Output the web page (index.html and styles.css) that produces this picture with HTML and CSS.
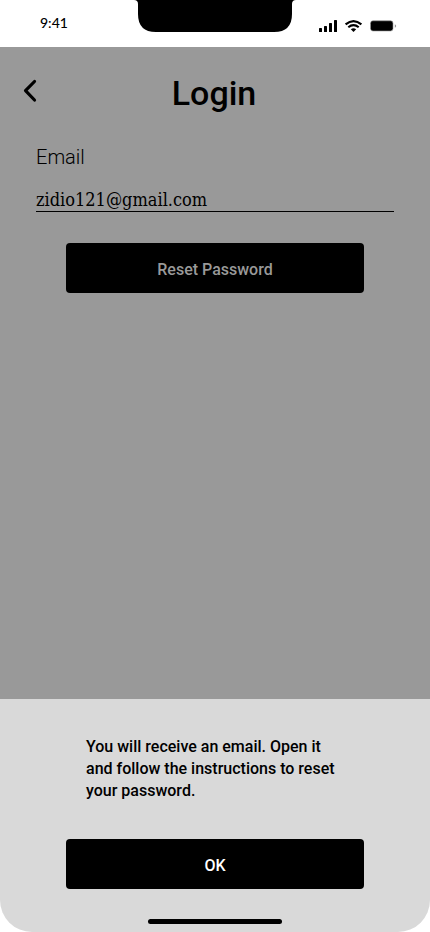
FILE: index.html
```html
<!DOCTYPE html>
<html lang="en">
<head>
<meta charset="utf-8">
<meta name="viewport" content="width=device-width, initial-scale=1">
<title>Login</title>
<link rel="stylesheet" href="styles.css">
</head>
<body>
<div class="screen">
  <header class="status">
    <span class="time">9:41</span>
    <svg class="notch" width="162" height="32" viewBox="0 0 162 32" aria-hidden="true"><path d="M0 0H162Q158 0 158 4V14Q158 32 140 32H22Q4 32 4 14V4Q4 0 0 0Z"/></svg>
    <div class="indicators">
      <svg width="78" height="12" viewBox="0 0 78 12" aria-hidden="true">
        <rect x="0" y="8" width="3" height="4" rx=".6"/>
        <rect x="5" y="6" width="3" height="6" rx=".6"/>
        <rect x="10" y="3" width="3" height="9" rx=".6"/>
        <rect x="15" y="0" width="3" height="12" rx=".6"/>
        <g fill="none" stroke="#000" stroke-width="2.1"><path d="M26.6 4.4Q34.5-2.2 42.4 4.4"/><path d="M29.3 7.3Q34.5 2.9 39.7 7.3"/></g>
        <path d="M31.8 9.3Q34.5 7.2 37.2 9.3L34.5 12Z"/>
        <rect x="51.5" y=".8" width="22.5" height="10.2" rx="2.4"/>
        <rect x="51.5" y=".8" width="22.5" height="10.2" rx="2.4" fill="none" stroke="#999" stroke-width=".6"/>
        <path d="M75.8 4.2Q77.2 4.8 77.2 6T75.8 7.8Z" fill="#999"/>
      </svg>
    </div>
  </header>
  <main class="page">
    <div class="heading">
      <button class="back" type="button" aria-label="Back"><svg width="16" height="24" viewBox="0 0 16 24" aria-hidden="true"><path d="M12.5 2.5L3.5 11.7L12.5 21"/></svg></button>
      <h1>Login</h1>
    </div>
    <form class="form">
      <label for="email">Email</label>
      <input id="email" type="email" value="zidio121@gmail.com">
      <button class="action muted" type="button">Reset Password</button>
    </form>
  </main>
  <section class="sheet" role="dialog" aria-labelledby="message">
    <p id="message">You will receive an email. Open it and follow the instructions to reset your password.</p>
    <button class="action" type="button">OK</button>
    <div class="home"></div>
  </section>
</div>
</body>
</html>
```
FILE: styles.css
```css
* { box-sizing: border-box; }
body { margin: 0; background: #fff; color: #000; font-family: Roboto, "Liberation Sans", sans-serif; }
button { font: inherit; color: inherit; border: 0; cursor: pointer; }
svg { display: block; }
.screen { min-height: 100vh; display: flex; flex-direction: column; background: #fff; }
.status { height: 47px; display: grid; grid-template-columns: 1fr auto 1fr; align-items: start; }
.time { padding: 14px 0 0 40px; font: 500 14px/18px Lato, sans-serif; }
.indicators { display: flex; justify-content: flex-end; padding: 20px 33px 0 0; }
.page { flex: 1; background: #999; padding-top: 24px; }
.heading { display: grid; grid-template-columns: 44px 1fr 46px; align-items: center; height: 40px; }
.heading h1 { margin: 0; padding-top: 4px; text-align: center; font-size: 34px; line-height: 36px; font-weight: 500; }
.back { justify-self: end; width: 22px; height: 24px; padding: 0; background: none; }
.back path { fill: none; stroke: #000; stroke-width: 3.2; stroke-linecap: round; stroke-linejoin: round; }
.form { display: flex; flex-direction: column; padding: 34px 36px 0; }
.form label { font-size: 20px; line-height: 24px; font-weight: 300; }
.form input { width: 100%; height: 43px; padding: 18px 0 0; border: 0; border-bottom: 1px solid #000; border-radius: 0; background: none; outline: 0; color: #000; font: 18px/24px "DejaVu Serif Condensed", "DejaVu Serif", serif; }
.action { height: 50px; margin: 0 30px; padding: 3px 0 0; border-radius: 4px; background: #000; color: #fff; font-size: 16px; line-height: 22px; font-weight: 500; }
.action.muted { margin-top: 31px; color: #999; }
.sheet { display: flex; flex-direction: column; padding: 37px 36px 8px; border-radius: 0 0 32px 32px; background: #d9d9d9; }
.sheet p { margin: 0 50px 37px; font-size: 16px; line-height: 22px; font-weight: 500; }
.home { width: 134px; height: 5px; margin: 30px auto 0; border-radius: 3px; background: #000; }
```
